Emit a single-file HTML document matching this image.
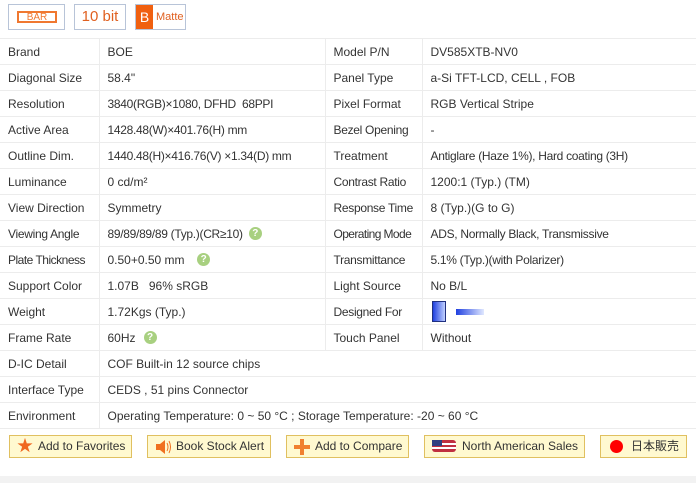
<!DOCTYPE html><html><head><meta charset="utf-8"><style>
body{margin:0;width:696px;height:483px;background:#fff;font-family:"Liberation Sans","Noto Sans CJK JP",sans-serif;font-size:12px;color:#333;position:relative;overflow:hidden}
.tag{position:absolute;top:4px;height:26px;border:1px solid #b8c4d8;box-sizing:border-box}
table{position:absolute;top:38px;left:0;border-collapse:collapse;width:696px;table-layout:fixed}
td{height:26px;padding:0 0 0 8px;border-top:1px solid #ececec;border-right:1px solid #ececec;box-sizing:border-box;white-space:nowrap;vertical-align:middle;line-height:14px;overflow:visible}
td:last-child{border-right:none}
tr:last-child td{border-bottom:1px solid #ececec}
.sm{letter-spacing:-0.3px}
.q{display:inline-block;width:13px;height:13px;border-radius:50%;background:#a8d080;color:#fff;font-size:10px;font-weight:bold;text-align:center;line-height:13px;vertical-align:top;margin-left:6px}
.btn{position:absolute;top:435px;height:23px;border:1px solid #e0c060;background:#fff9d0;box-sizing:border-box;font-size:12px;line-height:21px;color:#333}
.btn span.i{position:absolute;left:7px;top:4px}
</style></head><body>
<div class="tag" style="left:8px;width:57px"><div style="position:absolute;left:8px;top:6px;width:40px;height:12px;border:2px solid #f07830;box-sizing:border-box;color:#f07830;font-size:10px;line-height:9px;text-align:center">BAR</div></div>
<div class="tag" style="left:74px;width:52px;color:#e06020;font-size:15px;line-height:24px;text-align:center">10 bit</div>
<div class="tag" style="left:135px;width:51px"><div style="position:absolute;left:0;top:0;width:17px;height:24px;background:#f06010;color:#fff;font-size:14px;line-height:24px;text-align:center">B</div><div style="position:absolute;left:20px;top:0;color:#e06020;font-size:11px;line-height:24px">Matte</div></div>
<table>
<colgroup><col style="width:99px"><col style="width:226px"><col style="width:97px"><col style="width:274px"></colgroup>
<tr><td>Brand</td><td>BOE</td><td>Model P/N</td><td>DV585XTB-NV0</td></tr>
<tr><td>Diagonal Size</td><td>58.4"</td><td>Panel Type</td><td>a-Si TFT-LCD, CELL , FOB</td></tr>
<tr><td>Resolution</td><td class="sm">3840(RGB)×1080, DFHD&nbsp; 68PPI</td><td>Pixel Format</td><td>RGB Vertical Stripe</td></tr>
<tr><td>Active Area</td><td class="sm">1428.48(W)×401.76(H) mm</td><td class="sm">Bezel Opening</td><td>-</td></tr>
<tr><td>Outline Dim.</td><td class="sm">1440.48(H)×416.76(V) ×1.34(D) mm</td><td>Treatment</td><td class="sm">Antiglare (Haze 1%), Hard coating (3H)</td></tr>
<tr><td>Luminance</td><td>0 cd/m²</td><td class="sm">Contrast Ratio</td><td>1200:1 (Typ.) (TM)</td></tr>
<tr><td>View Direction</td><td>Symmetry</td><td class="sm">Response Time</td><td>8 (Typ.)(G to G)</td></tr>
<tr><td class="sm">Viewing Angle</td><td class="sm">89/89/89/89 (Typ.)(CR≥10)<span class="q">?</span></td><td class="sm" style="letter-spacing:-0.6px">Operating Mode</td><td class="sm">ADS, Normally Black, Transmissive</td></tr>
<tr><td class="sm" style="letter-spacing:-0.5px">Plate Thickness</td><td>0.50+0.50 mm&nbsp;&nbsp;<span class="q">?</span></td><td class="sm">Transmittance</td><td class="sm">5.1% (Typ.)(with Polarizer)</td></tr>
<tr><td>Support Color</td><td>1.07B&nbsp;&nbsp; 96% sRGB</td><td>Light Source</td><td>No B/L</td></tr>
<tr><td>Weight</td><td>1.72Kgs (Typ.)</td><td class="sm">Designed For</td><td><span style="display:inline-block;width:14px;height:21px;border:1px solid #203080;box-sizing:border-box;background:linear-gradient(90deg,#2040e0,#c0d0ff);vertical-align:middle;margin-left:1px"></span><span style="display:inline-block;width:28px;height:6px;background:linear-gradient(90deg,#2040e0,#e0e8ff);vertical-align:middle;margin-left:10px"></span></td></tr>
<tr><td>Frame Rate</td><td>60Hz<span class="q" style="margin-left:8px">?</span></td><td>Touch Panel</td><td>Without</td></tr>
<tr><td>D-IC Detail</td><td colspan="3">COF Built-in 12 source chips</td></tr>
<tr><td>Interface Type</td><td colspan="3">CEDS , 51 pins Connector</td></tr>
<tr><td>Environment</td><td colspan="3">Operating Temperature: 0 ~ 50 °C ; Storage Temperature: -20 ~ 60 °C</td></tr>
</table>
<div class="btn" style="left:9px;width:123px;padding-left:28px"><span class="i" style="color:#f06820;font-size:16px;top:0">★</span>Add to Favorites</div>
<div class="btn" style="left:147px;width:124px;padding-left:28px"><span class="i" style="top:4px"><svg width="16" height="14"><path d="M1 4h4l5-4v14l-5-4H1z" fill="#f07020"/><path d="M12 3q2 4 0 8M14 1q3 6 0 12" stroke="#f07020" fill="none"/></svg></span>Book Stock Alert</div>
<div class="btn" style="left:286px;width:123px;padding-left:28px"><span class="i" style="top:3px"><svg width="16" height="16"><path d="M6 0h4v6h6v4h-6v6H6v-6H0V6h6z" fill="#f08030"/></svg></span>Add to Compare</div>
<div class="btn" style="left:424px;width:161px;padding-left:37px"><span class="i" style="top:4px"><svg width="26" height="14"><rect x="0" y="0" width="24" height="12" rx="3" fill="#c03040"/><rect x="0" y="3" width="24" height="2" fill="#fff"/><rect x="0" y="7" width="24" height="2" fill="#fff"/><rect x="0" y="0" width="10" height="6" fill="#304080"/></svg></span>North American Sales</div>
<div class="btn" style="left:600px;width:87px;padding-left:30px"><span class="i" style="left:9px;top:4px;width:13px;height:13px;border-radius:50%;background:#f00"></span>日本販売</div>
<div style="position:absolute;left:0;top:476px;width:696px;height:7px;background:#f2f2f2"></div>
</body></html>
